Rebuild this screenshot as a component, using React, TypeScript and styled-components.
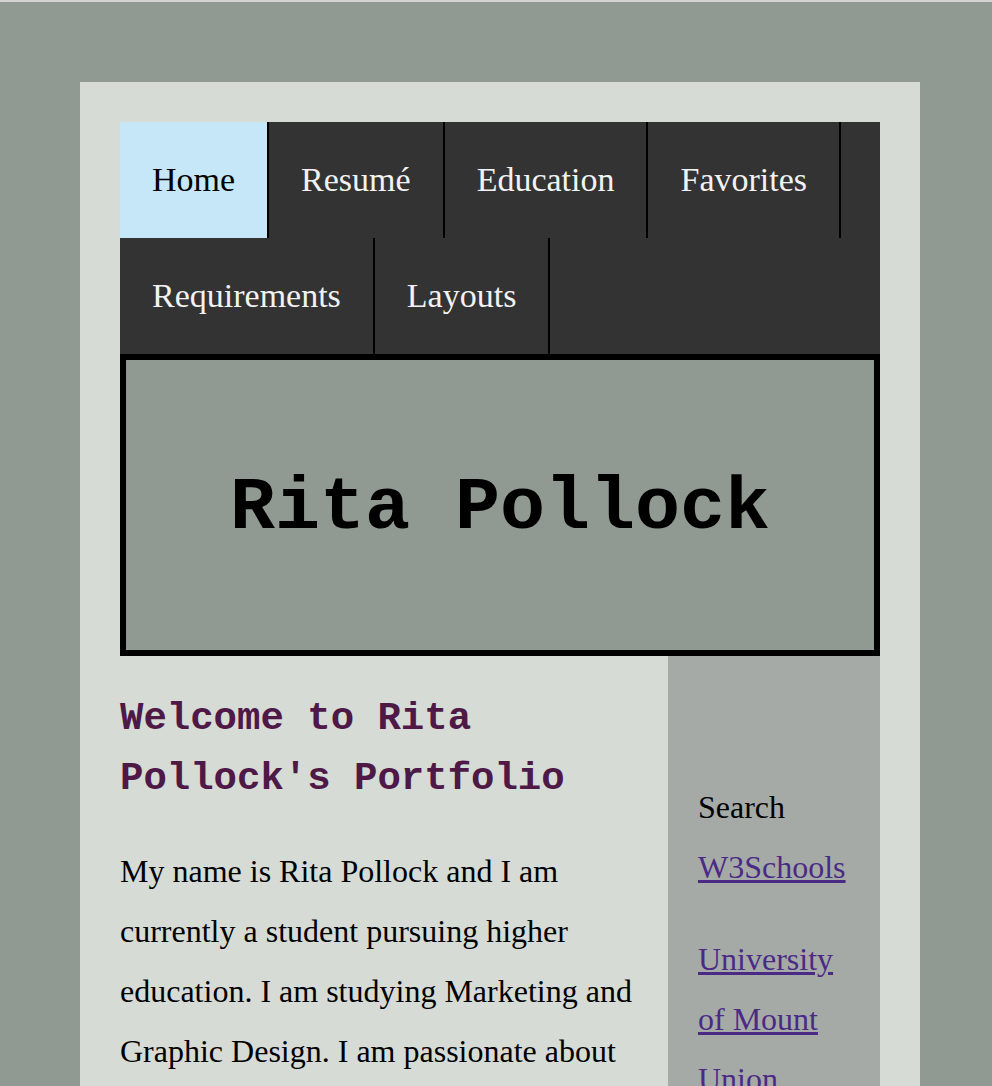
import React from "react";
import styled, { createGlobalStyle } from "styled-components";

const GlobalStyle = createGlobalStyle`
  html {
    border-top: 2px solid #d2d3d2;
    background: #919a92;
  }
  body {
    margin: 0;
    background: #919a92;
    font-family: "Liberation Serif", "Times New Roman", serif;
  }
`;

const Page = styled.div`
  padding: 80px 0 0 80px;
`;

const Container = styled.div`
  width: 840px;
  box-sizing: border-box;
  padding: 40px;
  background: #d6dbd6;
`;

const Nav = styled.ul`
  display: flex;
  flex-wrap: wrap;
  list-style: none;
  margin: 0;
  padding: 0;
  background: #333333;
`;

const NavItem = styled.li<{ $active?: boolean }>`
  display: flex;
  align-items: center;
  height: 116px;
  padding: 0 32px;
  border-right: 2px solid #000;
  background: ${(p) => (p.$active ? "#c5e7f7" : "transparent")};
  color: ${(p) => (p.$active ? "#000" : "#f2f2f2")};
  font-family: "Liberation Serif", "Times New Roman", serif;
  font-size: 34px;
`;

const Header = styled.header`
  display: flex;
  align-items: center;
  justify-content: center;
  height: 302px;
  box-sizing: border-box;
  border: 6px solid #000;
  background: #919a92;
`;

const Title = styled.h1`
  margin: 0;
  padding-top: 7px;
  font-family: "Liberation Mono", "Courier New", monospace;
  font-weight: bold;
  font-size: 75px;
  color: #000;
`;

const Content = styled.div`
  display: grid;
  grid-template-columns: 548px 212px;
`;

const MainCol = styled.main`
  padding-right: 30px;
`;

const Heading = styled.h2`
  margin: 33px 0 32px;
  font-family: "Liberation Mono", "Courier New", monospace;
  font-weight: bold;
  font-size: 39px;
  line-height: 60px;
  color: #4e1847;
`;

const Para = styled.p`
  margin: 32px 0;
  font-size: 32px;
  line-height: 60px;
  color: #000;
`;

const Sidebar = styled.aside`
  background: #a6aaa6;
  padding: 89px 30px 0;
`;

const SideLink = styled.a`
  color: #4b2a86;
  text-decoration: underline;
`;

export default function App() {
  const items = ["Home", "Resumé", "Education", "Favorites", "Requirements", "Layouts"];
  return (
    <>
      <GlobalStyle />
      <Page>
        <Container>
          <Nav>
            {items.map((it, i) => (
              <NavItem key={it} $active={i === 0}>
                {it}
              </NavItem>
            ))}
          </Nav>
          <Header>
            <Title>Rita Pollock</Title>
          </Header>
          <Content>
            <MainCol>
              <Heading>Welcome to Rita Pollock's Portfolio</Heading>
              <Para>
                My name is Rita Pollock and I am currently a student pursuing higher
                education. I am studying Marketing and Graphic Design. I am passionate about
                creating visual content and building brands that connect with people.
              </Para>
            </MainCol>
            <Sidebar>
              <Para>
                Search
                <br />
                <SideLink href="#">W3Schools</SideLink>
              </Para>
              <Para>
                <SideLink href="#">University of Mount Union</SideLink>
              </Para>
            </Sidebar>
          </Content>
        </Container>
      </Page>
    </>
  );
}
